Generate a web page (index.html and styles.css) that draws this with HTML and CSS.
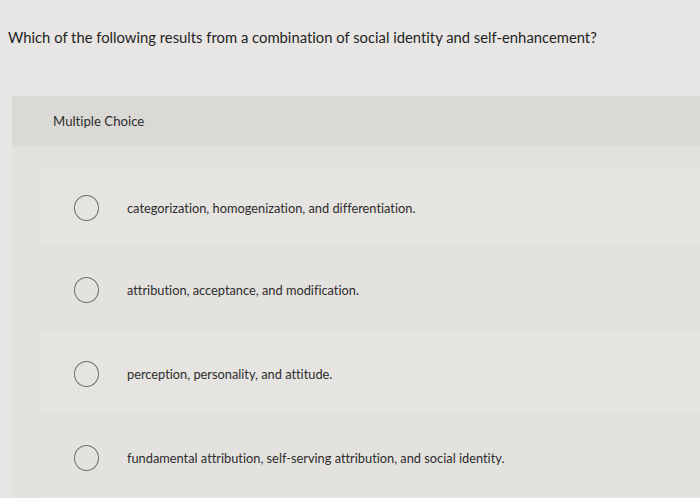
FILE: index.html
```html
<!DOCTYPE html>
<html lang="en">
<head>
<meta charset="utf-8">
<link rel="stylesheet" href="styles.css">
<title>Question</title>
</head>
<body>
<div class="page">
  <p class="question">Which of the following results from a combination of social identity and self-enhancement?</p>
  <section class="card">
    <div class="card-head">Multiple Choice</div>
    <div class="options">
      <label class="option"><span class="radio"></span><span class="opt-text">categorization, homogenization, and differentiation.</span></label>
      <label class="option"><span class="radio"></span><span class="opt-text">attribution, acceptance, and modification.</span></label>
      <label class="option"><span class="radio"></span><span class="opt-text">perception, personality, and attitude.</span></label>
      <label class="option"><span class="radio"></span><span class="opt-text">fundamental attribution, self-serving attribution, and social identity.</span></label>
    </div>
  </section>
</div>
</body>
</html>
```

FILE: styles.css
```css
html, body {
  margin: 0;
  padding: 0;
}
body {
  width: 700px;
  height: 498px;
  overflow: hidden;
  background: #e8e6e4;
  font-family: Lato, "Open Sans", sans-serif;
  font-variant-ligatures: none;
  color: #2a2a2a;
}
.page {
  display: flex;
  flex-direction: column;
}
.question {
  margin: 28px 0 0 8px;
  font-size: 14.8px;
  line-height: 18px;
  color: #1f1f1f;
}
.card {
  margin: 50px 0 0 12px;
  background: #e3e1de;
  display: flex;
  flex-direction: column;
}
.card-head {
  background: #dbd9d6;
  height: 50px;
  padding-left: 41px;
  display: flex;
  align-items: center;
  font-size: 13.2px;
  color: #2e2e2e;
}
.options {
  display: flex;
  flex-direction: column;
  padding: 21px 0 0 28px;
}
.option {
  display: flex;
  align-items: center;
  height: 84px;
  padding-left: 34px;
  gap: 28px;
  background: #e6e4e1;
  border-top: 1px solid #e0dedb;
  box-sizing: border-box;
}
.option:first-child {
  height: 80px;
}
.option:nth-child(even) {
  background: #e4e2df;
}
.radio {
  width: 25px;
  height: 26px;
  border: 1.5px solid #6e6e6e;
  border-radius: 50%;
  box-sizing: border-box;
  flex: none;
}
.opt-text {
  font-size: 12.8px;
  color: #2c2c2c;
}
```
